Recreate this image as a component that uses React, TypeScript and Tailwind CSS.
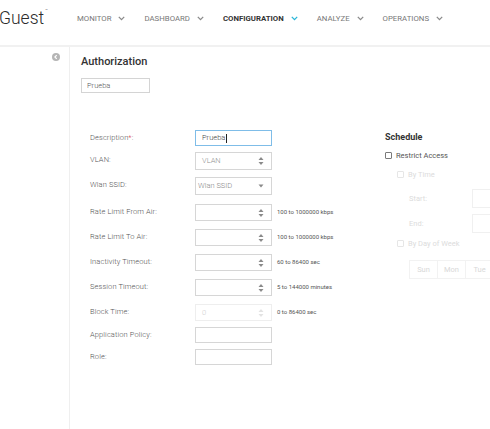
import React from "react";

const navItems = [
  { label: "MONITOR", active: false },
  { label: "DASHBOARD", active: false },
  { label: "CONFIGURATION", active: true },
  { label: "ANALYZE", active: false },
  { label: "OPERATIONS", active: false },
];

function Chevron({ color }: { color: string }) {
  return (
    <svg width="7" height="5" viewBox="0 0 7 5" className="ml-[7px]">
      <path d="M0.8 0.9 L3.5 3.6 L6.2 0.9" fill="none" stroke={color} strokeWidth="1.3" />
    </svg>
  );
}

function Spinner({ disabled }: { disabled?: boolean }) {
  const c = disabled ? "#e3e3e3" : "#8a8a8a";
  return (
    <svg width="6" height="10" viewBox="0 0 6 10">
      <path d="M0.5 4 L3 1 L5.5 4 Z" fill={c} />
      <path d="M0.5 6 L3 9 L5.5 6 Z" fill={c} />
    </svg>
  );
}

function Checkbox({ disabled }: { disabled?: boolean }) {
  return (
    <span
      className={`inline-block w-[7px] h-[7px] rounded-[1px] border ${
        disabled ? "border-[#e6e6e6]" : "border-[#7a7a7a]"
      }`}
    />
  );
}

function NumberBox({ value, placeholder, disabled, h = "h-[17px]" }: any) {
  return (
    <div
      className={`w-[77px] ${h} flex items-center justify-between pl-[6px] pr-[7px] border ${
        disabled ? "border-[#eeeeee]" : "border-[#d6d6d6]"
      }`}
    >
      <span className={`text-[7.5px] font-light ${disabled ? "text-[#d0d0d0]" : "text-[#8f8f8f]"}`}>
        {value ?? placeholder ?? ""}
      </span>
      <Spinner disabled={disabled} />
    </div>
  );
}

function Row({ label, mt, children, hint, required }: any) {
  return (
    <div className={`flex items-start ${mt}`}>
      <div className="w-[105px] pt-[3px] text-[7.5px] leading-[10px] text-[#555] font-light tracking-[0.1px]">
        {label}
        {required && <span className="text-[#e05050]">*</span>}
        :
      </div>
      {children}
      {hint && (
        <div className="ml-[5px] pt-[4px] text-[6px] leading-[8px] text-[#555] whitespace-nowrap">{hint}</div>
      )}
    </div>
  );
}

export default function App() {
  return (
    <div className="w-[490px] h-[429px] overflow-hidden bg-white font-['Roboto',sans-serif] flex flex-col">
      {/* Header */}
      <div className="h-[47px] shrink-0 border-b-2 border-[#f1f1f1] pb-[10px]">
        <div className="h-[37px] flex items-center">
          <div className="-ml-[1px] flex items-start w-[78px]">
            <span className="text-[17.5px] font-light text-[#2b2b2b] leading-none">Guest</span>
            <span className="text-[4px] text-[#666] leading-none ml-[1px] -mt-[1px]">™</span>
          </div>
          <div className="flex items-center">
            {navItems.map((n) => (
              <div key={n.label} className="flex items-center mr-[19px]">
                <span
                  className={`text-[7.8px] leading-none ${
                    n.active ? "font-bold text-[#333]" : "text-[#777]"
                  }`}
                >
                  {n.label}
                </span>
                <Chevron color={n.active ? "#29b6d8" : "#8a8a8a"} />
              </div>
            ))}
          </div>
        </div>
      </div>

      {/* Body */}
      <div className="flex flex-1">
        <div className="w-[70px] shrink-0 border-r border-[#efefef] flex justify-end pr-[9px] pt-[6px]">
          <svg width="8" height="8" viewBox="0 0 8 8">
            <circle cx="4" cy="4" r="4" fill="#b5b5b5" />
            <path d="M4.7 2.2 L2.9 4 L4.7 5.8" fill="none" stroke="#fff" strokeWidth="1.2" />
          </svg>
        </div>

        <div className="flex-1 pl-[11px] pt-[8px]">
          <div className="text-[11px] font-medium text-[#333] leading-[14px]">Authorization</div>
          <div className="mt-[9px] w-[69px] h-[15px] border border-[#d4d4d4] flex items-center pl-[5px]">
            <span className="text-[7.5px] text-[#555] font-light">Prueba</span>
          </div>

          <div className="flex mt-[37px] ml-[9px]">
            {/* Left form */}
            <div className="w-[295px] shrink-0">
              <Row label="Description" required mt="mt-0">
                <div className="w-[77px] h-[16px] border border-[#7fbde8] flex items-center pl-[6px]">
                  <span className="text-[7.5px] text-[#444] font-light">Prueba</span>
                  <span className="w-px h-[9px] bg-[#222] ml-[1px]" />
                </div>
              </Row>
              <Row label="VLAN" mt="mt-[6px]">
                <NumberBox placeholder="VLAN" h="h-[18px]" />
              </Row>
              <Row label="Wlan SSID" mt="mt-[7px]">
                <div className="w-[77px] h-[18px] border border-[#d6d6d6] flex items-center justify-between pl-[2px] pr-[7px]">
                  <span className="text-[7.5px] text-[#888] font-light">Wlan SSID</span>
                  <svg width="6" height="4" viewBox="0 0 6 4">
                    <path d="M0.5 0.5 L3 3.5 L5.5 0.5 Z" fill="#8a8a8a" />
                  </svg>
                </div>
              </Row>
              <Row label="Rate Limit From Air" mt="mt-[9px]" hint="100 to 1000000 kbps">
                <NumberBox />
              </Row>
              <Row label="Rate Limit To Air" mt="mt-[8px]" hint="100 to 1000000 kbps">
                <NumberBox />
              </Row>
              <Row label="Inactivity Timeout" mt="mt-[8px]" hint="60 to 86400 sec">
                <NumberBox />
              </Row>
              <Row label="Session Timeout" mt="mt-[8px]" hint="5 to 144000 minutes">
                <NumberBox />
              </Row>
              <Row label="Block Time" mt="mt-[8px]" hint="0 to 86400 sec">
                <NumberBox value="0" disabled />
              </Row>
              <Row label="Application Policy" mt="mt-[6px]">
                <div className="w-[77px] h-[16px] border border-[#d6d6d6]" />
              </Row>
              <Row label="Role" mt="mt-[6px]">
                <div className="w-[77px] h-[16px] border border-[#d6d6d6]" />
              </Row>
            </div>

            {/* Schedule */}
            <div className="flex-1 pt-[1px]">
              <div className="text-[9px] font-bold text-[#333] leading-[12px]">Schedule</div>
              <div className="mt-[7px] flex items-center gap-[4px]">
                <Checkbox />
                <span className="text-[7.5px] text-[#555] leading-[11px]">Restrict Access</span>
              </div>
              <div className="mt-[8px] ml-[12px] flex items-center gap-[4px]">
                <Checkbox disabled />
                <span className="text-[7.5px] text-[#dcdcdc] leading-[11px]">By Time</span>
              </div>
              <div className="mt-[9px] ml-[24px] flex items-center">
                <span className="w-[63px] text-[7.5px] text-[#dcdcdc]">Start:</span>
                <div className="flex-1 h-[19px] border border-[#f0f0f0] border-r-0" />
              </div>
              <div className="mt-[6px] ml-[24px] flex items-center">
                <span className="w-[63px] text-[7.5px] text-[#dcdcdc]">End:</span>
                <div className="flex-1 h-[19px] border border-[#f0f0f0] border-r-0" />
              </div>
              <div className="mt-[5px] ml-[12px] flex items-center gap-[4px]">
                <Checkbox disabled />
                <span className="text-[7.5px] text-[#dcdcdc] leading-[11px]">By Day of Week</span>
              </div>
              <div className="mt-[11px] ml-[24px] flex">
                {["Sun", "Mon", "Tue"].map((d) => (
                  <div
                    key={d}
                    className="w-[29px] h-[19px] shrink-0 border border-[#f2f2f2] -ml-px first:ml-0 flex items-center justify-center text-[7.5px] text-[#d8d8d8]"
                  >
                    {d}
                  </div>
                ))}
              </div>
            </div>
          </div>
        </div>
      </div>
    </div>
  );
}
